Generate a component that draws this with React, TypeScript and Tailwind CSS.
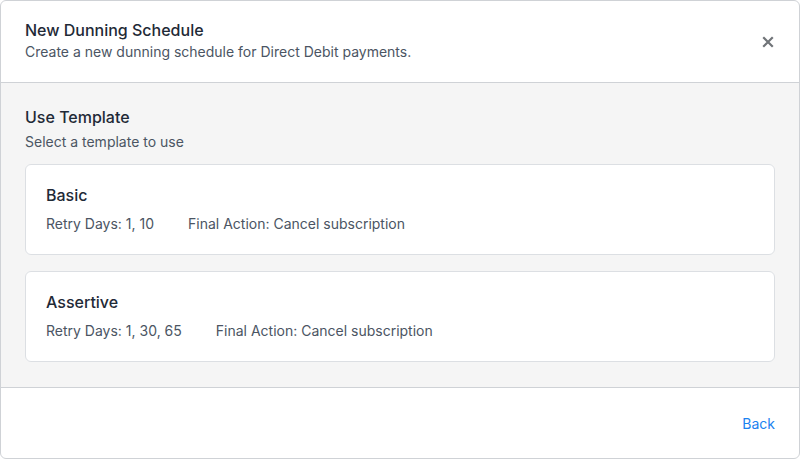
import React from "react";

const templates = [
  { name: "Basic", days: "1, 10", action: "Cancel subscription" },
  { name: "Assertive", days: "1, 30, 65", action: "Cancel subscription" },
];

export default function App() {
  return (
    <div
      className="w-[800px] h-[459px] bg-white border border-[#cfd2d6] rounded-[6px] flex flex-col overflow-hidden"
      style={{ fontFamily: "Inter, 'Noto Sans', sans-serif" }}
    >
      <div className="flex items-center justify-between pl-6 pr-[25px] pt-[17px] pb-[20px] border-b border-[#cfd2d6]">
        <div className="flex flex-col">
          <div className="text-[16px] leading-6 font-medium text-[#1f2a37]">New Dunning Schedule</div>
          <div className="text-[14px] leading-5 text-[#4b5563]">
            Create a new dunning schedule for Direct Debit payments.
          </div>
        </div>
        <svg width="12" height="12" viewBox="0 0 12 12" className="mt-1">
          <path d="M2 2L10 10M10 2L2 10" stroke="#707478" strokeWidth="2.2" strokeLinecap="square" />
        </svg>
      </div>
      <div className="bg-[#f5f5f5] px-6 pt-[22px] pb-[25px] flex flex-col border-b border-[#cfd2d6]">
        <div className="text-[16px] leading-6 font-medium text-[#1f2a37]">Use Template</div>
        <div className="text-[14px] leading-5 text-[#4b5563] mt-[3px]">Select a template to use</div>
        <div className="flex flex-col gap-4 mt-3">
          {templates.map((t) => (
            <div
              key={t.name}
              className="bg-white border border-[#dcdfe3] rounded-[6px] pl-5 pr-5 pt-[18px] pb-5 flex flex-col gap-[7px]"
            >
              <div className="text-[16px] leading-6 font-medium text-[#1f2a37]">{t.name}</div>
              <div className="flex text-[14px] leading-5 text-[#4b5563] gap-[34px]">
                <span>Retry Days: {t.days}</span>
                <span>Final Action: {t.action}</span>
              </div>
            </div>
          ))}
        </div>
      </div>
      <div className="flex-1 flex items-center justify-end pr-6 pt-[1px]">
        <span className="text-[14px] leading-5 text-[#1a82f0]">Back</span>
      </div>
    </div>
  );
}
